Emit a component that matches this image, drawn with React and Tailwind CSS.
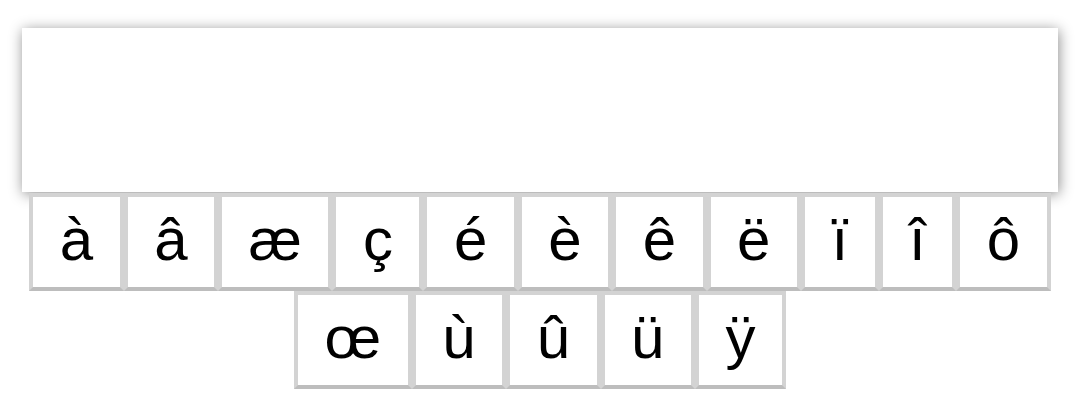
import React from 'react';

const rowOne = ['à', 'â', 'æ', 'ç', 'é', 'è', 'ê', 'ë', 'ï', 'î', 'ô'];
const rowTwo = ['œ', 'ù', 'û', 'ü', 'ÿ'];

const Key = ({ ch }) => (
  <button
    type="button"
    className="bg-white border-4 border-[#d3d3d3] border-b-[#bdbdbd] px-[26.5px] pt-[11px] pb-[15px] text-[60px] leading-[64px] text-black"
  >
    {ch}
  </button>
);

const App = () => {
  return (
    <div className="min-h-[414px] bg-white pt-[28px] pl-[22px] font-['Liberation_Sans',Arial,sans-serif]">
      <div className="w-[1036px]">
        <div className="h-[164px] bg-white shadow-[1px_2px_13px_rgba(0,0,0,0.45)]" />
        <div className="flex justify-center pt-px">
          {rowOne.map((ch) => (
            <Key key={ch} ch={ch} />
          ))}
        </div>
        <div className="flex justify-center">
          {rowTwo.map((ch) => (
            <Key key={ch} ch={ch} />
          ))}
        </div>
      </div>
    </div>
  );
};

export default App;
